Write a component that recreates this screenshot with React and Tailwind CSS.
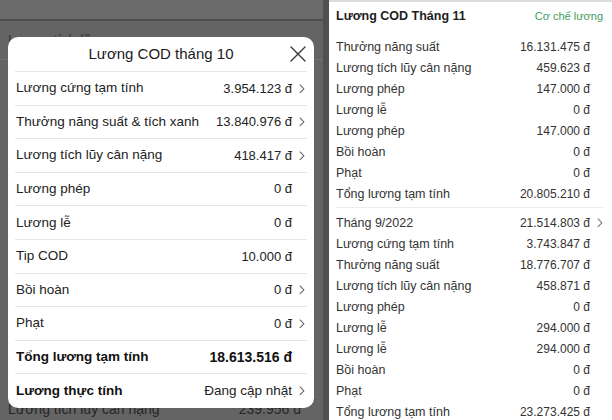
import React from "react";

const modalRows = [
  { label: "Lương cứng tạm tính", value: "3.954.123 đ", arrow: true },
  { label: "Thưởng năng suất & tích xanh", value: "13.840.976 đ", arrow: true },
  { label: "Lương tích lũy cân nặng", value: "418.417 đ", arrow: true },
  { label: "Lương phép", value: "0 đ" },
  { label: "Lương lễ", value: "0 đ" },
  { label: "Tip COD", value: "10.000 đ" },
  { label: "Bồi hoàn", value: "0 đ", arrow: true },
  { label: "Phạt", value: "0 đ", arrow: true },
  { label: "Tổng lương tạm tính", value: "18.613.516 đ", bold: true },
  { label: "Lương thực tính", value: "Đang cập nhật", arrow: true, bold: true, plainValue: true },
];

const nov = [
  ["Thưởng năng suất", "16.131.475 đ"],
  ["Lương tích lũy cân nặng", "459.623 đ"],
  ["Lương phép", "147.000 đ"],
  ["Lương lễ", "0 đ"],
  ["Lương phép", "147.000 đ"],
  ["Bồi hoàn", "0 đ"],
  ["Phạt", "0 đ"],
  ["Tổng lương tạm tính", "20.805.210 đ"],
];

const sep = [
  ["Tháng 9/2022", "21.514.803 đ", true],
  ["Lương cứng tạm tính", "3.743.847 đ"],
  ["Thưởng năng suất", "18.776.707 đ"],
  ["Lương tích lũy cân nặng", "458.871 đ"],
  ["Lương phép", "0 đ"],
  ["Lương lễ", "294.000 đ"],
  ["Lương lễ", "294.000 đ"],
  ["Bồi hoàn", "0 đ"],
  ["Phạt", "0 đ"],
  ["Tổng lương tạm tính", "23.273.425 đ"],
];

function Chevron({ size = 8, className = "" }) {
  return (
    <svg width={size} height={size * 1.6} viewBox="0 0 6 10" className={className}>
      <path d="M1 1l4 4-4 4" fill="none" stroke="currentColor" strokeWidth="1.1" strokeLinecap="round" strokeLinejoin="round" />
    </svg>
  );
}

function ModalRow({ label, value, arrow, bold, plainValue, last }) {
  return (
    <div className={`mx-[7px] h-[33.6px] flex items-center ${last ? "" : "border-b border-[#e6e6e6]"}`}>
      <span className={`flex-1 pl-[1px] text-[13.5px] ${bold ? "font-bold text-[#111]" : "text-[#222]"}`}>{label}</span>
      <span className={bold && !plainValue ? "text-[14px] font-bold text-[#111]" : plainValue ? "text-[13.5px] text-[#222]" : "text-[13px] text-[#222]"}>
        {value}
      </span>
      <span className="w-[15px] flex justify-end pr-[2px] text-[#666]">
        {arrow ? <Chevron size={6} /> : null}
      </span>
    </div>
  );
}

function SmallRow({ label, value, arrow }) {
  return (
    <div className="h-[21px] flex items-center">
      <span className="flex-1 text-[12.5px]">{label}</span>
      <span className="text-[12px]">{value}</span>
      <span className="w-[13px] flex justify-end text-[#777]">{arrow ? <Chevron size={6} /> : null}</span>
    </div>
  );
}

export default function App() {
  return (
    <div
      className="w-[612px] h-[420px] overflow-hidden flex bg-[#505050]"
      style={{ fontFamily: '"Liberation Sans", Arial, sans-serif' }}
    >
      {/* left: dimmed page with modal */}
      <div className="relative w-[323px] h-full bg-[#646464] flex flex-col text-[14px]">
        <div className="h-[21px] bg-[#6b6b6b] border-b-2 border-[#4d4d4d]" />
        <div className="h-[39px] border-b border-[#707070] flex items-center px-[8px] text-[#3a3a3a]">
          <span>Lương tích lũy</span>
        </div>
        <div className="flex-1" />
        <div className="h-[22px] flex items-center justify-between pl-[8px] pr-[22px] text-[#262626]">
          <span>Lương tích lũy cân nặng</span>
          <span>239.956 đ</span>
        </div>

        <div className="absolute left-[8px] top-[37px] w-[306px] h-[371px] bg-white rounded-[10px] overflow-hidden">
          <div className="h-[35px] relative flex items-center justify-center text-[15px] text-[#1a1a1a] border-b border-[#e6e6e6] mx-[7px]">
            Lương COD tháng 10
            <svg width="16" height="16" viewBox="0 0 16 16" className="absolute right-[1px] top-[9px] text-[#333]">
              <path d="M1 1l14 14M15 1L1 15" stroke="currentColor" strokeWidth="1.3" strokeLinecap="round" />
            </svg>
          </div>
          {modalRows.map((r, i) => (
            <ModalRow key={i} {...r} last={i === modalRows.length - 1} />
          ))}
        </div>
      </div>

      {/* right: list */}
      <div className="ml-[6px] flex-1 bg-white border-t-2 border-[#dcdcdc] pl-[7px] pr-[9px] text-[#333]">
        <div className="h-[26px] pt-[3px] flex items-center justify-between">
          <span className="text-[12.5px] font-bold text-[#1e1e1e]">Lương COD Tháng 11</span>
          <span className="text-[11px] text-[#3f9d62]">Cơ chế lương</span>
        </div>
        <div className="h-[8.5px]" />
        {nov.map(([l, v], i) => (
          <SmallRow key={i} label={l} value={v} />
        ))}
        <div className="mt-[2.5px] border-t border-[#ececec] mb-[4.5px]" />
        {sep.map(([l, v, a], i) => (
          <SmallRow key={i} label={l} value={v} arrow={a} />
        ))}
      </div>
    </div>
  );
}
